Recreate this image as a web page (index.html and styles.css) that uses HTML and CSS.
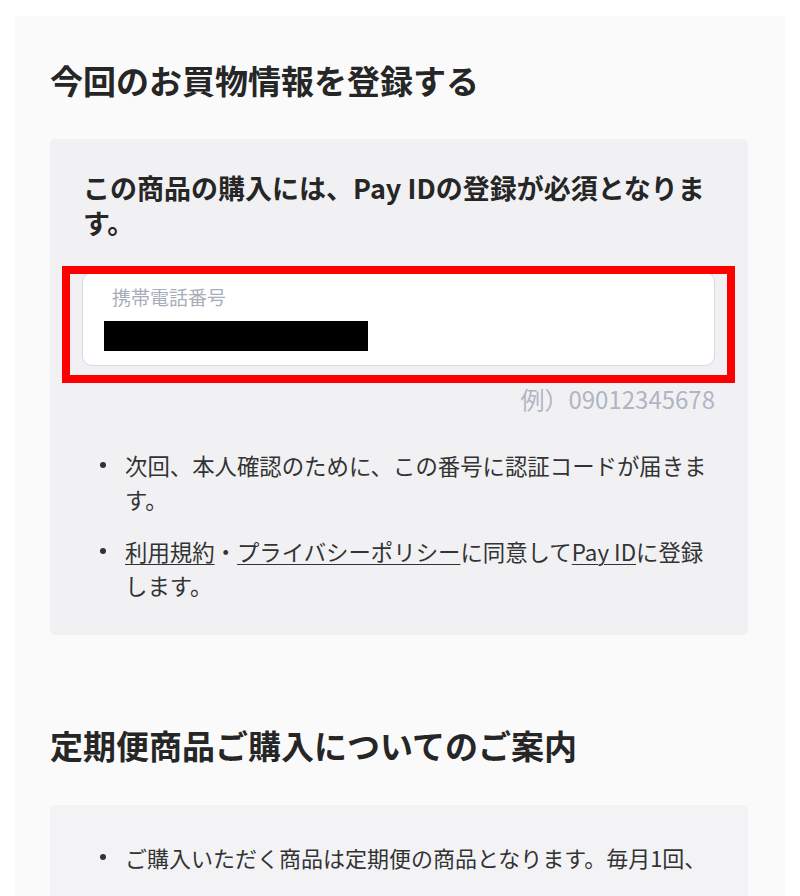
FILE: index.html
```html
<!DOCTYPE html>
<html lang="ja">
<head>
<meta charset="utf-8">
<title>今回のお買物情報を登録する</title>
<link rel="stylesheet" href="styles.css">
</head>
<body>
<main class="page">
  <section class="section">
    <h2 class="heading">今回のお買物情報を登録する</h2>
    <div class="card card-register">
      <p class="card-title">この商品の購入には、Pay IDの登録が必須となります。</p>
      <div class="field">
        <div class="field-label">携帯電話番号</div>
        <div class="field-value"><span class="redact"></span></div>
      </div>
      <div class="field-hint">例）09012345678</div>
      <ul class="notes">
        <li>次回、本人確認のために、この番号に認証コードが届きます。</li>
        <li><a class="link" href="#">利用規約</a>・<a class="link" href="#">プライバシーポリシー</a>に同意して<a class="link" href="#">Pay ID</a>に登録します。</li>
      </ul>
      <div class="highlight"></div>
    </div>
  </section>
  <section class="section section-second">
    <h2 class="heading">定期便商品ご購入についてのご案内</h2>
    <div class="card card-info">
      <ul class="notes">
        <li>ご購入いただく商品は定期便の商品となります。毎月1回、</li>
      </ul>
    </div>
  </section>
</main>
</body>
</html>
```

FILE: styles.css
```css
* { box-sizing: border-box; }

html, body {
  margin: 0;
  padding: 0;
  background: #ffffff;
}

body {
  font-family: "Noto Sans CJK JP", "Noto Sans", sans-serif;
  color: #333333;
}

.page {
  margin: 16px 15px 0;
  padding: 41px 37px 40px 35px;
  background: #fafafb;
  min-height: 900px;
}

.heading {
  margin: 0;
  font-size: 33px;
  line-height: 46px;
  font-weight: 700;
  color: #262626;
}

.section-second {
  margin-top: 87px;
}

.card {
  position: relative;
  margin-top: 36px;
  background: #f1f1f4;
  border-radius: 5px;
  padding: 31px 33px 33px 32px;
}

.card-info {
  margin-top: 37px;
  padding-top: 35px;
  padding-bottom: 40px;
  background: #f3f3f6;
}

.card-title {
  margin: 0 0 0 1px;
  font-size: 27px;
  line-height: 35px;
  font-weight: 700;
  color: #262626;
}

.field {
  margin-top: 32px;
  background: #ffffff;
  border: 1px solid #d8dae3;
  border-radius: 10px;
  padding: 13px 26px 14px 21px;
}

.field-label {
  margin-left: 8px;
  font-size: 19px;
  line-height: 22px;
  color: #a9adba;
}

.field-value {
  margin-top: 13px;
  height: 30px;
}

.redact {
  display: block;
  width: 264px;
  height: 30px;
  background: #000000;
}

.field-hint {
  margin-top: 17px;
  text-align: right;
  font-size: 24px;
  line-height: 31px;
  color: #b1b5c3;
}

.notes {
  list-style: none;
  margin: 34px 0 0;
  padding: 0 0 0 43px;
}

.card-info .notes {
  margin-top: 0;
}

.notes li {
  position: relative;
  font-size: 22.4px;
  line-height: 34px;
  color: #333333;
}

.card-info .notes li {
  font-size: 22px;
}

.notes li + li {
  margin-top: 18px;
}

.notes li::before {
  content: "";
  position: absolute;
  left: -25px;
  top: 14px;
  width: 6px;
  height: 6px;
  border-radius: 50%;
  background: #333333;
}

.link {
  color: #333333;
  text-decoration: underline;
  text-decoration-thickness: 1px;
  text-underline-offset: 3px;
}

.highlight {
  position: absolute;
  left: 12px;
  top: 127px;
  width: 673px;
  height: 117px;
  border: 8px solid #ff0000;
  pointer-events: none;
}
```
